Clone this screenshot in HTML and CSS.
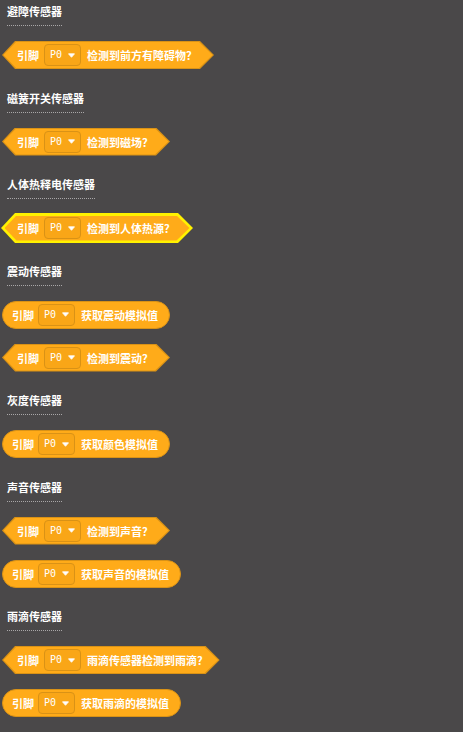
FILE: index.html
```html
<!DOCTYPE html>
<html lang="zh">
<head>
<meta charset="utf-8">
<title>传感器</title>
<link rel="stylesheet" href="styles.css">
</head>
<body>
<div class="palette">
  <div class="section">
    <div class="heading">避障传感器</div>
    <div class="block hex"><span class="label">引脚</span><span class="dropdown"><span class="pin">P0</span><svg class="caret" width="7" height="5" viewBox="0 0 7 5"><path d="M0.5 0.8 L6.5 0.8 L3.5 4.3 Z" fill="#fff" stroke="#fff" stroke-width="0.8" stroke-linejoin="round"/></svg></span><span class="text">检测到前方有障碍物？</span></div>
  </div>
  <div class="section">
    <div class="heading">磁簧开关传感器</div>
    <div class="block hex"><span class="label">引脚</span><span class="dropdown"><span class="pin">P0</span><svg class="caret" width="7" height="5" viewBox="0 0 7 5"><path d="M0.5 0.8 L6.5 0.8 L3.5 4.3 Z" fill="#fff" stroke="#fff" stroke-width="0.8" stroke-linejoin="round"/></svg></span><span class="text">检测到磁场？</span></div>
  </div>
  <div class="section">
    <div class="heading">人体热释电传感器</div>
    <div class="block hex selected"><span class="label">引脚</span><span class="dropdown"><span class="pin">P0</span><svg class="caret" width="7" height="5" viewBox="0 0 7 5"><path d="M0.5 0.8 L6.5 0.8 L3.5 4.3 Z" fill="#fff" stroke="#fff" stroke-width="0.8" stroke-linejoin="round"/></svg></span><span class="text">检测到人体热源？</span></div>
  </div>
  <div class="section">
    <div class="heading">震动传感器</div>
    <div class="block round"><span class="label">引脚</span><span class="dropdown"><span class="pin">P0</span><svg class="caret" width="7" height="5" viewBox="0 0 7 5"><path d="M0.5 0.8 L6.5 0.8 L3.5 4.3 Z" fill="#fff" stroke="#fff" stroke-width="0.8" stroke-linejoin="round"/></svg></span><span class="text">获取震动模拟值</span></div>
    <div class="block hex"><span class="label">引脚</span><span class="dropdown"><span class="pin">P0</span><svg class="caret" width="7" height="5" viewBox="0 0 7 5"><path d="M0.5 0.8 L6.5 0.8 L3.5 4.3 Z" fill="#fff" stroke="#fff" stroke-width="0.8" stroke-linejoin="round"/></svg></span><span class="text">检测到震动？</span></div>
  </div>
  <div class="section">
    <div class="heading">灰度传感器</div>
    <div class="block round"><span class="label">引脚</span><span class="dropdown"><span class="pin">P0</span><svg class="caret" width="7" height="5" viewBox="0 0 7 5"><path d="M0.5 0.8 L6.5 0.8 L3.5 4.3 Z" fill="#fff" stroke="#fff" stroke-width="0.8" stroke-linejoin="round"/></svg></span><span class="text">获取颜色模拟值</span></div>
  </div>
  <div class="section">
    <div class="heading">声音传感器</div>
    <div class="block hex"><span class="label">引脚</span><span class="dropdown"><span class="pin">P0</span><svg class="caret" width="7" height="5" viewBox="0 0 7 5"><path d="M0.5 0.8 L6.5 0.8 L3.5 4.3 Z" fill="#fff" stroke="#fff" stroke-width="0.8" stroke-linejoin="round"/></svg></span><span class="text">检测到声音？</span></div>
    <div class="block round"><span class="label">引脚</span><span class="dropdown"><span class="pin">P0</span><svg class="caret" width="7" height="5" viewBox="0 0 7 5"><path d="M0.5 0.8 L6.5 0.8 L3.5 4.3 Z" fill="#fff" stroke="#fff" stroke-width="0.8" stroke-linejoin="round"/></svg></span><span class="text">获取声音的模拟值</span></div>
  </div>
  <div class="section">
    <div class="heading">雨滴传感器</div>
    <div class="block hex"><span class="label">引脚</span><span class="dropdown"><span class="pin">P0</span><svg class="caret" width="7" height="5" viewBox="0 0 7 5"><path d="M0.5 0.8 L6.5 0.8 L3.5 4.3 Z" fill="#fff" stroke="#fff" stroke-width="0.8" stroke-linejoin="round"/></svg></span><span class="text">雨滴传感器检测到雨滴?</span></div>
    <div class="block round"><span class="label">引脚</span><span class="dropdown"><span class="pin">P0</span><svg class="caret" width="7" height="5" viewBox="0 0 7 5"><path d="M0.5 0.8 L6.5 0.8 L3.5 4.3 Z" fill="#fff" stroke="#fff" stroke-width="0.8" stroke-linejoin="round"/></svg></span><span class="text">获取雨滴的模拟值</span></div>
  </div>
</div>
</body>
</html>
```

FILE: styles.css
```css
html, body {
  margin: 0;
  background: #4a4849;
}
body {
  padding: 4px 0 0 2px;
  font-family: "Noto Sans CJK SC", "Noto Sans", sans-serif;
  font-size: 11px;
  font-weight: 700;
  color: #ffffff;
}
.palette {
  display: flex;
  flex-direction: column;
  gap: 21.5px;
}
.section {
  display: flex;
  flex-direction: column;
  align-items: flex-start;
  gap: 15px;
}
.heading {
  margin-left: 5px;
  line-height: 14px;
  height: 14px;
  padding-bottom: 7px;
  border-bottom: 1px dotted #a9a7a8;
  white-space: nowrap;
}
.block {
  position: relative;
  display: inline-flex;
  align-items: center;
  height: 28px;
  box-sizing: border-box;
  white-space: nowrap;
  line-height: 14px;
}
.block > * {
  position: relative;
  z-index: 1;
}
.round {
  padding: 0 11px 0 10px;
  background: #ffab19;
  border: 1px solid #d99216;
  border-radius: 14px;
}
.round .label { margin-left: -1px; }
.hex {
  padding: 0 17px 0 15px;
}
.hex::before,
.hex::after {
  content: "";
  position: absolute;
  z-index: 0;
}
.hex::before {
  inset: 0;
  background: #d99216;
  clip-path: polygon(0 50%, 13px 0, calc(100% - 14px) 0, 100% 50%, calc(100% - 14px) 100%, 13px 100%);
}
.hex::after {
  inset: 1px 1.5px;
  background: #ffab19;
  clip-path: polygon(0 50%, 12.5px 0, calc(100% - 13.5px) 0, 100% 50%, calc(100% - 13.5px) 100%, 12.5px 100%);
}
.hex.selected::before {
  inset: -1px -1px;
  background: #fff200;
  clip-path: polygon(0 50%, 14px 0, calc(100% - 15px) 0, 100% 50%, calc(100% - 15px) 100%, 14px 100%);
}
.hex.selected::after {
  inset: 1.5px 2.5px;
  clip-path: polygon(0 50%, 12px 0, calc(100% - 13px) 0, 100% 50%, calc(100% - 13px) 100%, 12px 100%);
}
.dropdown {
  display: inline-flex;
  align-items: center;
  box-sizing: border-box;
  height: 22px;
  width: 37px;
  margin: 0 6px 0 5px;
  padding: 0 5px;
  border: 1px solid #d99216;
  border-radius: 4px;
  background: #f9a617;
}
.round .dropdown { margin-left: 4px; }
.pin {
  font-family: "DejaVu Sans Mono", "Liberation Mono", monospace;
  font-size: 10px;
  font-weight: 400;
  width: 12px;
  letter-spacing: 0;
}
.caret {
  display: block;
  margin-left: 6px;
}
```
